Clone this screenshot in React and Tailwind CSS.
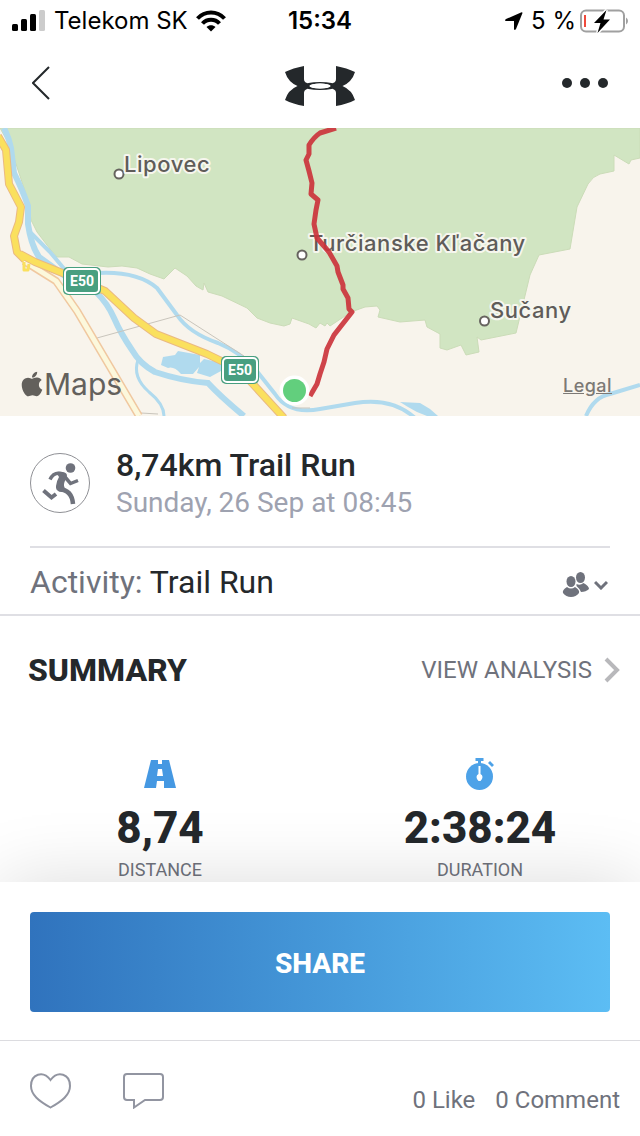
import { FaApple } from 'react-icons/fa';

const Signal = () => (
    <svg viewBox="0 0 34 22" className="w-[34px] h-[22px]" aria-hidden="true">
        <rect x="0" y="14" width="6" height="7" rx="1.5" />
        <rect x="9" y="9" width="6" height="12" rx="1.5" />
        <rect x="18" y="4" width="6" height="17" rx="1.5" />
        <rect x="27" y="0" width="6" height="21" rx="1.5" fill="#cccccc" />
    </svg>
);

const Wifi = () => (
    <svg viewBox="0 0 30 22" className="w-[30px] h-[22px]" aria-hidden="true">
        <g fill="none" stroke="#000" strokeWidth="4">
            <path d="M1.500 8.500C9 .5 21 .5 28.500 8.500" />
            <path d="M6.500 13.500C11 8.500 19 8.500 23.500 13.500" />
        </g>
        <path d="M10.500 17C13 14.500 17 14.500 19.500 17L15 21.500Z" />
    </svg>
);

const Battery = () => (
    <svg viewBox="0 0 48 24" className="w-12 h-6" aria-hidden="true">
        <rect x="1" y="1.500" width="43" height="21" rx="5" fill="none" stroke="#a0a0a0" strokeWidth="2" />
        <path d="M46 8.500q2 1 2 3.500t-2 3.500z" fill="#a0a0a0" />
        <rect x="4" y="6" width="2" height="12" fill="#ef4a3c" />
        <path d="M26.500 1L14 14h6.500l-3 10L30 10.500h-6.500z" stroke="#fff" strokeWidth="3" paintOrder="stroke" />
    </svg>
);

const Logo = () => (
    <svg viewBox="0 0 70 40" className="w-[70px] h-10" fill="#24282b" role="img" aria-label="Under Armour">
        <path d="M19 0Q8 2 0 6Q3 16 12.500 20Q3 24 0 34Q8 38 19 40V27Q19 24 22 23L25 20L22 17Q19 16 19 13Z" />
        <path d="M51 0Q62 2 70 6Q67 16 57.500 20Q67 24 70 34Q62 38 51 40V27Q51 24 48 23L45 20L48 17Q51 16 51 13Z" />
        <path d="M17 20Q21 16 35 16T53 20Q49 24 35 24T17 20ZM24 20Q27 22.500 35 22.500T46 20Q43 17.500 35 17.500T24 20Z" fillRule="evenodd" />
        <ellipse cx="35" cy="20" rx="10.500" ry="2.500" fill="#fff" />
    </svg>
);

const Runner = () => (
    <svg viewBox="0 0 60 60" className="w-[60px] h-[60px] shrink-0" aria-hidden="true">
        <circle cx="30" cy="30" r="29.500" fill="#fff" stroke="#8f9095" />
        <circle cx="40.500" cy="15" r="4.800" fill="#6f727c" />
        <path d="M26 19Q36 18 37 22Q37 25 34.500 29Q33 33 35.500 36Q35 40 29 38.500Q25.500 37 26 33Q26.500 28 29 24Z" fill="#6f727c" />
        <g fill="none" stroke="#6f727c" strokeWidth="4">
            <path d="M33 21Q24 18 20 26.500" strokeWidth="3.500" />
            <path d="M35 24L40.500 30.500L48 27.500" strokeWidth="3.500" />
            <path d="M29 36Q42 37 43 51" strokeWidth="4.500" />
            <path d="M13.500 37.500L21.500 44.500L26 41" />
        </g>
    </svg>
);

const places = [
    { name: 'Lipovec', x: 124, y: 44, dot: [119, 46] },
    { name: 'Turčianske Kľačany', x: 309, y: 123, dot: [302, 127] },
    { name: 'Sučany', x: 490, y: 190, dot: [484.5, 193] },
];

const shields = [[82, 153], [240, 242]];

const highway = 'M-2 8L6 22L9 56L21 79L19 94L14 108L17 124L25 132M20 126L35 134L65 146L105 163L134 190L156 206L207 226L240 242L284 290';

const RouteMap = () => (
    <div className="relative h-72 overflow-hidden bg-[#f8f4ec]">
        <svg viewBox="0 0 640 288" preserveAspectRatio="xMidYMid slice" className="w-full h-full" role="img" aria-label="Route map">
            <path
                d="M0 0H640V30L631 32L629 36L614 27V43L600 46Q593 48 588 56L577 79L570 121L539 127L530 147L516 205L481 212L477 209L479 224L466 227L461 217L447 222L440 220V206L427 199L425 192L400 194L378 189L380 182L377 178L365 179L351 184L330 198L327 195L325 198L320 195L316 200L309 196L292 190L290 196L284 198L270 195L257 190L247 180L222 168L208 164L204 155L203 162L196 158L187 148L175 140L164 151L150 146L137 140L122 138L108 139L82 136L69 129L57 129L50 121L37 104L31 92L28 72L10 18Z"
                fill="#d1e5c2" stroke="#cbdcb8" strokeWidth="1"
            />
            <g fill="none" stroke="#b0daee">
                <path d="M4 0Q9 10 11 20L14 45Q23 63 28 78V96Q31 117 39 129Q53 139 65 148L96 164Q108 176 114 190Q121 206 132 222Q140 236 155 244Q182 253 208 255Q221 269 244 288" strokeWidth="6" />
                <path d="M31 105L50 124L66 143" strokeWidth="4" />
                <path d="M98 145Q137 143 157 160L177 187Q189 205 218 215Q240 224 256 242L275 266Q289 287 320 281L355 275Q392 269 415 290" strokeWidth="4" />
                <path d="M138 232Q132 249 149 264Q164 276 164 288" strokeWidth="3" />
                <path d="M586 288Q594 269 610 266L640 257" strokeWidth="4" />
            </g>
            <path d="M161 237L163 229L175 227L178 223L200 227V235L204 231L222 235L221 243L210 249L197 245L199 239L193 246L181 246Q174 238 168 240Z" fill="#b0daee" />
            <path d="M400 274L420 275L430 281L438 288H427L417 284L408 279Z" fill="#b0daee" />
            <g fill="none" stroke="#c9c5bc">
                <path d="M97 210L180 187L244 228" />
                <path d="M141 285L158 286M292 280H310" />
            </g>
            <g fill="none" strokeLinejoin="round">
                <path d="M24 133L56 153L77 183L139 288" stroke="#f0c8a0" strokeWidth="8" />
                <path d="M24 133L56 153L77 183L139 288" stroke="#fcf8dc" strokeWidth="5" />
                <path d={highway} stroke="#eab982" strokeWidth="8" />
                <path d={highway} stroke="#fae05e" strokeWidth="6" />
                <path d="M24 134V142H28L29 136" stroke="#fae05e" strokeWidth="3" />
            </g>
            {places.map((place) => (
                <g key={place.name}>
                    <circle cx={place.dot[0]} cy={place.dot[1]} r="4.500" fill="#fff" stroke="#66635f" strokeWidth="2" />
                    <text x={place.x} y={place.y} fill="#5f5c59" stroke="#f6f6ee" strokeWidth="4" strokeLinejoin="round" paintOrder="stroke" className="font-['Inter',sans-serif] text-[22px] font-medium tracking-wide">
                        {place.name}
                    </text>
                </g>
            ))}
            <path
                d="M336 0L320 5Q314 9 309 17V26L306 32L309 43L312 55L311 66L318 72L316 82L314 96L317 110L329 124L337 138L338 144L343 157V161L348 170L349 181L352 184L334 207L327 221L324 234L320 246L317 256L310 268"
                fill="none" stroke="#cb343c" strokeWidth="5" strokeLinejoin="round" opacity=".92"
            />
            {shields.map(([x, y]) => (
                <g key={x}>
                    <rect x={x - 19} y={y - 14} width="38" height="28" rx="5" fill="#489f80" />
                    <rect x={x - 17} y={y - 12} width="34" height="24" rx="4" fill="#489f80" stroke="#fff" strokeWidth="2" />
                    <text x={x} y={y + 5} textAnchor="middle" fill="#fff" className="font-['Roboto',sans-serif] text-sm font-bold">E50</text>
                </g>
            ))}
            <circle cx="294.500" cy="262.500" r="15" fill="#fff" />
            <circle cx="294.500" cy="262.500" r="11.500" fill="#62cf7d" />
        </svg>
        <div className="absolute left-5 bottom-4 flex items-center text-[#63605c] font-['Inter',sans-serif] text-[30px] leading-8">
            <FaApple className="w-6 h-7" aria-hidden="true" />
            Maps
        </div>
        <a href="#legal" className="absolute right-7 bottom-4 text-[#7c7975] font-['Inter',sans-serif] text-lg leading-7 font-medium tracking-wide underline">Legal</a>
    </div>
);

const Road = () => (
    <svg viewBox="0 0 32 28" className="w-8 h-7" fill="#4598e2" aria-hidden="true">
        <path fillRule="evenodd" d="M7 0H14V4H18V0H25L32 28H20V21H13L12 28H0ZM14 9L13 16H19L18 9Z" />
    </svg>
);

const Stopwatch = () => (
    <svg viewBox="0 0 28 32" className="w-7 h-8" fill="#4da2e8" aria-hidden="true">
        <circle cx="13.500" cy="18.500" r="13.500" />
        <path d="M9.500 0h8v3h-2.500v4h-3V3H9.500zM24 3l4 4-2 2-4-4z" />
        <path d="M12.500 8h2v8q2 1 2 3t-2 4h-2q-2-2-2-4t2-3z" fill="#fff" />
    </svg>
);

const stats = [
    { label: 'DISTANCE', value: '8,74', icon: Road },
    { label: 'DURATION', value: '2:38:24', icon: Stopwatch },
];

const App = () => {
    return (
        <div className="min-h-screen flex flex-col bg-white text-[#24282b] font-['Roboto',sans-serif]">
            <div className="h-10 shrink-0 grid grid-cols-[1fr_auto_1fr] items-center px-3 pt-0.5 text-black font-['Inter',sans-serif] text-2xl">
                <div className="flex items-center gap-2">
                    <Signal />
                    <span>Telekom SK</span>
                    <Wifi />
                </div>
                <span className="font-semibold">15:34</span>
                <div className="flex items-center justify-end gap-1">
                    <svg viewBox="0 0 18 18" className="w-[18px] h-[18px] mr-1" aria-hidden="true">
                        <path d="M17.500 1Q17.500 0 16 .500L1 7Q-1 8.500 1 9H9V17Q9.500 19 11 17Z" />
                    </svg>
                    <span>5 %</span>
                    <Battery />
                </div>
            </div>

            <header className="h-[88px] shrink-0 grid grid-cols-3 items-center px-8 pb-0.5">
                <button type="button" aria-label="Back" className="w-5 h-9">
                    <svg viewBox="0 0 20 36" className="w-5 h-9" fill="none" stroke="#24282b" strokeWidth="2">
                        <path d="M17 2L1 18L17 34" />
                    </svg>
                </button>
                <div className="flex justify-center pt-1.5"><Logo /></div>
                <button type="button" aria-label="More" className="flex justify-self-end gap-2">
                    <span className="w-2.5 h-2.5 rounded-full bg-[#24282b]" />
                    <span className="w-2.5 h-2.5 rounded-full bg-[#24282b]" />
                    <span className="w-2.5 h-2.5 rounded-full bg-[#24282b]" />
                </button>
            </header>

            <main className="flex-1">
                <RouteMap />

                <section className="mx-[30px] h-[132px] flex items-center gap-[26px] pt-1 border-b-2 border-[#dfdfe4]">
                    <Runner />
                    <div>
                        <h1 className="text-[32px] leading-10 font-medium">8,74km Trail Run</h1>
                        <p className="text-[28px] leading-9 text-[#9ea2b0]">Sunday, 26 Sep at 08:45</p>
                    </div>
                </section>

                <section className="h-[68px] px-[30px] flex items-center justify-between pt-0.5 border-b-2 border-[#dfdfe4]">
                    <p className="text-[32px] leading-9"><span className="text-[#6f727c]">Activity:</span> Trail Run</p>
                    <button type="button" aria-label="Privacy: friends" className="flex items-center gap-1 pt-1.5 pr-0.5">
                        <svg viewBox="0 0 28 26" className="w-7 h-[26px]" fill="#6f727c" aria-hidden="true">
                            <ellipse cx="9" cy="9.500" rx="4.500" ry="5.500" />
                            <path d="M5 15Q9 18 13 15Q18 18 17 21Q14 25 9 25T1 21Q0 18 5 15Z" />
                            <ellipse cx="18.500" cy="5.500" rx="4.500" ry="5.500" />
                            <path d="M14.500 12Q18 14 21.500 11Q27 14 27 17Q24 20 19 20Q18 17 14.500 14Z" />
                        </svg>
                        <svg viewBox="0 0 14 10" className="w-3.5 h-2.5" fill="none" stroke="#6f727c" strokeWidth="3">
                            <path d="M1 2L7 8L13 2" />
                        </svg>
                    </button>
                </section>

                <section className="pt-[34px]">
                    <div className="flex items-center justify-between pl-7 pr-5">
                        <h2 className="text-[32px] leading-10 font-extrabold">SUMMARY</h2>
                        <a href="#analysis" className="flex items-center gap-3 text-2xl leading-10 text-[#6f727c]">
                            VIEW ANALYSIS
                            <svg viewBox="0 0 16 26" className="w-4 h-[26px]" fill="none" stroke="#b8b8bb" strokeWidth="4" aria-hidden="true">
                                <path d="M2 2L13 13L2 24" />
                            </svg>
                        </a>
                    </div>
                    <div className="grid grid-cols-2 pt-[68px]">
                        {stats.map((stat) => (
                            <div key={stat.label} className="flex flex-col items-center">
                                <div className="h-8 flex items-center"><stat.icon /></div>
                                <p className="mt-3 text-[44px] leading-[52px] font-extrabold">{stat.value}</p>
                                <p className="mt-1 text-lg leading-6 text-[#6f727c]">{stat.label}</p>
                            </div>
                        ))}
                    </div>
                </section>
            </main>

            <footer className="sticky bottom-0 bg-white shadow-[0_0_70px_rgba(0,0,0,0.14)]">
                <div className="px-[30px] pt-[30px] pb-7">
                    <button type="button" className="w-full h-[100px] pt-1 rounded-sm bg-linear-to-r from-[#3073bd] to-[#5cbdf4] text-white text-[28px] font-extrabold">
                        SHARE
                    </button>
                </div>
                <div className="h-24 flex items-center justify-between pl-[30px] pr-5 border-t border-[#dcdce0]">
                    <div className="flex items-center gap-[52px] pt-1">
                        <button type="button" aria-label="Like">
                            <svg viewBox="0 0 41 36" className="w-[41px] h-9" fill="none" stroke="#9295a1" strokeWidth="2">
                                <path d="M20.500 7C13-3 1 1 1 13C1 22 9 28 20.500 34.500C32 28 40 22 40 13C40 1 28-3 20.500 7Z" />
                            </svg>
                        </button>
                        <button type="button" aria-label="Comment">
                            <svg viewBox="0 0 41 36" className="w-[41px] h-9" fill="none" stroke="#9295a1" strokeWidth="2">
                                <path d="M4 1H37Q40 1 40 4V24Q40 27 37 27H22L11 34.500V27H4Q1 27 1 24V4Q1 1 4 1Z" />
                            </svg>
                        </button>
                    </div>
                    <div className="flex gap-5 pt-[22px] text-2xl leading-8 text-[#6f727c]">
                        <a href="#likes">0 Like</a>
                        <a href="#comments">0 Comment</a>
                    </div>
                </div>
            </footer>
        </div>
    );
};

export default App;
